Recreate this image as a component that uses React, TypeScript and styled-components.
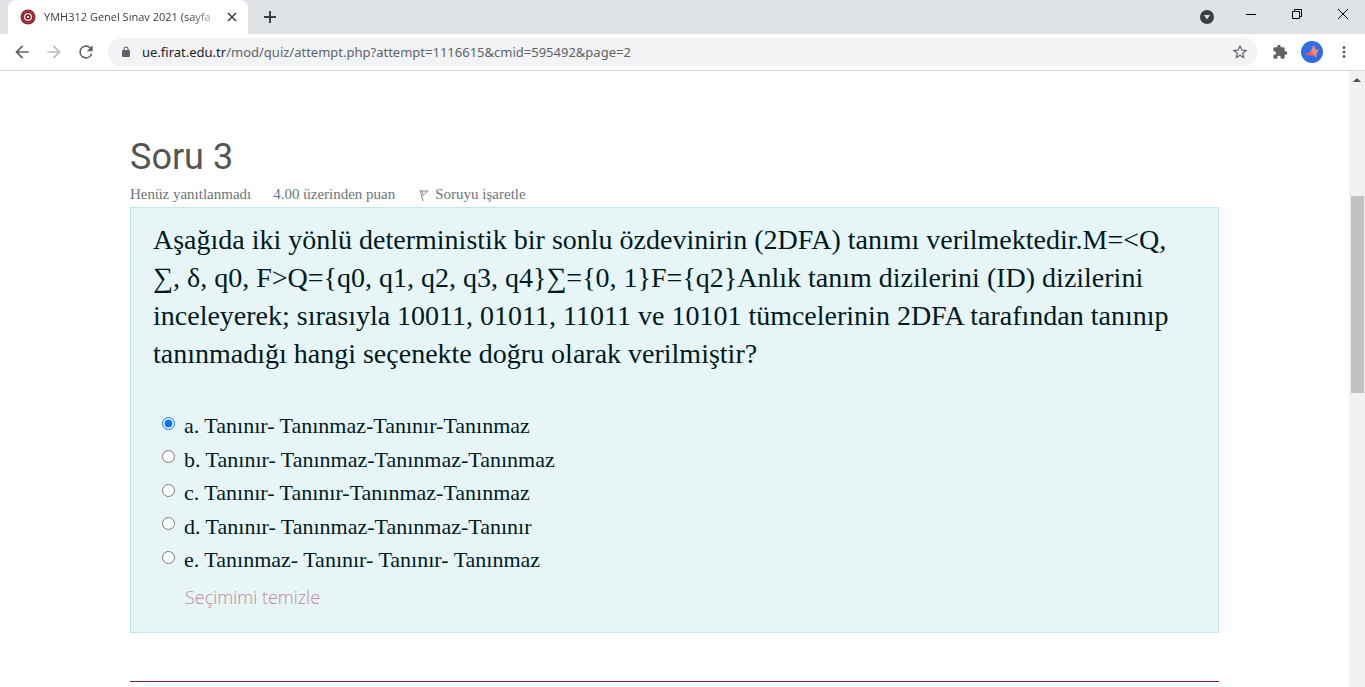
import React, { useState } from 'react';
import styled, { createGlobalStyle } from 'styled-components';

const GlobalStyle = createGlobalStyle`
  * { box-sizing: border-box; }
  html, body, #root { height: 100%; }
  body { margin: 0; background: #fff; overflow: hidden; }
`;

const ui = `'Open Sans', 'Noto Sans', sans-serif`;
const serif = `Georgia, 'Liberation Serif', serif`;

const Browser = styled.div`
  display: flex;
  flex-direction: column;
  height: 100vh;
  font-family: ${ui};
`;

const TabStrip = styled.header`
  display: flex;
  align-items: flex-end;
  flex: none;
  height: 34px;
  padding-left: 8px;
  background: #dee1e6;
`;

const Tab = styled.div`
  display: flex;
  align-items: center;
  width: 240px;
  height: 34px;
  padding: 0 8px 0 12px;
  border-radius: 8px 8px 0 0;
  background: #fff;
`;

const TabTitle = styled.span`
  flex: 1;
  min-width: 0;
  margin: 0 6px 0 8px;
  overflow: hidden;
  white-space: nowrap;
  font-size: 11px;
  line-height: 16px;
  color: #3c4043;
  mask-image: linear-gradient(to right, #000 84%, rgba(0, 0, 0, 0.2));
`;

const IconButton = styled.button<{ $width?: number; $height?: number }>`
  display: flex;
  align-items: center;
  justify-content: center;
  flex: none;
  width: ${(p) => p.$width ?? 32}px;
  height: ${(p) => p.$height ?? 32}px;
  padding: 0;
  border: 0;
  background: transparent;
  color: #5f6368;
`;

const WindowControls = styled.div`
  display: flex;
  align-items: flex-start;
  align-self: flex-start;
  margin-left: auto;
`;

const Toolbar = styled.nav`
  display: flex;
  align-items: center;
  flex: none;
  height: 37px;
  padding: 0 5px 0 6px;
  border-bottom: 1px solid #d5d7da;
  background: #fff;
`;

const AddressBar = styled.label`
  display: flex;
  align-items: center;
  flex: 1;
  height: 28px;
  margin: 0 6px;
  padding: 0 2px 0 12px;
  border-radius: 14px;
  background: #f1f3f4;
`;

const Address = styled.div`
  position: relative;
  flex: 1;
  height: 20px;
  margin-left: 10px;
  font-family: 'Noto Sans', sans-serif;
  font-size: 13px;
  line-height: 20px;
`;

const AddressInput = styled.input`
  width: 100%;
  height: 20px;
  padding: 0;
  border: 0;
  outline: 0;
  background: transparent;
  font: inherit;
  color: transparent;
`;

const AddressText = styled.span`
  position: absolute;
  inset: 0;
  pointer-events: none;
  white-space: nowrap;
  color: #5f6368;
`;

const Host = styled.span`
  color: #202124;
`;

const Viewport = styled.div`
  display: flex;
  flex: 1;
  min-height: 0;
`;

const Page = styled.main`
  flex: 1;
  min-width: 0;
  padding: 64px 130px 0;
  overflow: hidden;
  font-family: ${serif};
`;

const Title = styled.h1`
  margin: 0;
  font-family: Roboto, sans-serif;
  font-size: 36px;
  font-weight: 400;
  line-height: 44px;
  color: #555;
`;

const Meta = styled.div`
  display: flex;
  align-items: center;
  gap: 22px;
  height: 20px;
  margin: 5px 0 3px;
  font-size: 15px;
  line-height: 20px;
  color: #6c757d;
`;

const FlagLink = styled.a`
  display: flex;
  align-items: center;
  gap: 6px;
  color: inherit;
  text-decoration: none;
`;

const Card = styled.section`
  padding: 13px 22px 20px;
  border: 1px solid #bee5eb;
  background: #e7f5f6;
  color: #001a1e;
`;

const Question = styled.p`
  margin: 0 0 37px;
  font-size: 28px;
  line-height: 38px;
`;

const Answers = styled.fieldset`
  display: flex;
  flex-direction: column;
  justify-content: space-between;
  height: 166px;
  margin: 0;
  padding: 0 0 0 9px;
  border: 0;
`;

const Answer = styled.label`
  display: flex;
  align-items: center;
  gap: 9px;
  font-size: 22px;
  line-height: 32px;
`;

const Radio = styled.input`
  width: 13px;
  height: 13px;
  margin: 0 0 6px;
  accent-color: #0075ff;
`;

const ClearLink = styled.a`
  display: inline-block;
  margin: 6px 0 0 32px;
  font-family: ${ui};
  font-size: 18px;
  font-weight: 300;
  line-height: 30px;
  color: #c487a0;
  text-decoration: none;
`;

const Divider = styled.hr`
  height: 1px;
  margin: 48px 0 0;
  border: 0;
  background: #8b1f41;
`;

const ScrollTrack = styled.div`
  display: flex;
  flex-direction: column;
  align-items: center;
  width: 16px;
  background: #f1f1f1;
`;

const ScrollThumb = styled.div`
  width: 13px;
  height: 32%;
  margin-top: 108px;
  background: #c1c1c1;
`;

const question =
  'Aşağıda iki yönlü deterministik bir sonlu özdevinirin (2DFA) tanımı verilmektedir.M=<Q, ∑, δ, q0, ' +
  'F>Q={q0, q1, q2, q3, q4}∑={0, 1}F={q2}Anlık tanım dizilerini (ID) dizilerini inceleyerek; sırasıyla ' +
  '10011, 01011, 11011 ve 10101 tümcelerinin 2DFA tarafından tanınıp tanınmadığı hangi seçenekte doğru ' +
  'olarak verilmiştir?';

const options = [
  'a. Tanınır- Tanınmaz-Tanınır-Tanınmaz',
  'b. Tanınır- Tanınmaz-Tanınmaz-Tanınmaz',
  'c. Tanınır- Tanınır-Tanınmaz-Tanınmaz',
  'd. Tanınır- Tanınmaz-Tanınmaz-Tanınır',
  'e. Tanınmaz- Tanınır- Tanınır- Tanınmaz',
];

const Icon = ({ d, size = 20, color = '#5f6368' }: { d: string; size?: number; color?: string }) => (
  <svg width={size} height={size} viewBox="0 0 24 24" fill={color} aria-hidden="true">
    <path d={d} />
  </svg>
);

const paths = {
  back: 'M20 11H7.83l5.59-5.59L12 4l-8 8 8 8 1.41-1.41L7.83 13H20v-2z',
  forward: 'M12 4l-1.41 1.41L16.17 11H4v2h12.17l-5.58 5.59L12 20l8-8z',
  reload:
    'M17.65 6.35A7.95 7.95 0 0 0 12 4a8 8 0 1 0 7.73 10h-2.08A6 6 0 1 1 12 6c1.66 0 3.14.69 4.22 1.78L13 11h7V4l-2.35 2.35z',
  lock: 'M18 8h-1V6A5 5 0 0 0 7 6v2H6a2 2 0 0 0-2 2v10a2 2 0 0 0 2 2h12a2 2 0 0 0 2-2V10a2 2 0 0 0-2-2zM9 6a3 3 0 0 1 6 0v2H9V6z',
  star: 'M22 9.24l-7.19-.62L12 2 9.19 8.63 2 9.24l5.46 4.73L5.82 21 12 17.27 18.18 21l-1.63-7.03L22 9.24zM12 15.4l-3.76 2.27 1-4.28-3.32-2.88 4.38-.38L12 6.1l1.71 4.04 4.38.38-3.32 2.88 1 4.28L12 15.4z',
  puzzle:
    'M20.5 11H19V7a2 2 0 0 0-2-2h-4V3.500a2.500 2.500 0 0 0-5 0V5H4a2 2 0 0 0-2 2v3.800h1.500a2.700 2.700 0 0 1 0 5.400H2V20a2 2 0 0 0 2 2h3.800v-1.500a2.700 2.700 0 0 1 5.400 0V22H17a2 2 0 0 0 2-2v-4h1.500a2.500 2.500 0 0 0 0-5z',
  dots: 'M12 8a2 2 0 1 0 0-4 2 2 0 0 0 0 4zm0 2a2 2 0 1 0 0 4 2 2 0 0 0 0-4zm0 6a2 2 0 1 0 0 4 2 2 0 0 0 0-4z',
};

export default function App() {
  const [selected, setSelected] = useState<number | null>(0);
  const [address, setAddress] = useState('ue.firat.edu.tr/mod/quiz/attempt.php?attempt=1116615&cmid=595492&page=2');
  const slash = address.indexOf('/') < 0 ? address.length : address.indexOf('/');

  return (
    <Browser>
      <GlobalStyle />
      <TabStrip>
        <Tab>
          <svg width="16" height="16" viewBox="0 0 16 16" aria-hidden="true">
            <circle cx="8" cy="8" r="7.500" fill="#8d1b22" />
            <circle cx="8" cy="8" r="5.800" fill="none" stroke="#c98486" strokeDasharray="1 1" />
            <circle cx="8" cy="8" r="4" fill="#f6e9e9" />
            <circle cx="8" cy="8" r="2.700" fill="#8d1b22" />
            <path d="M7 7h2v2H7z" fill="#f6e9e9" />
          </svg>
          <TabTitle>YMH312 Genel Sınav 2021 (sayfa</TabTitle>
          <IconButton $width={16} $height={16} aria-label="Close tab">
            <svg width="10" height="10" viewBox="0 0 10 10" stroke="#3c4043" strokeWidth="1.600">
              <path d="M1 1l8 8M9 1L1 9" />
            </svg>
          </IconButton>
        </Tab>
        <IconButton $width={44} $height={34} aria-label="New tab">
          <svg width="12" height="12" viewBox="0 0 12 12" stroke="#3c4043" strokeWidth="2">
            <path d="M6 0v12M0 6h12" />
          </svg>
        </IconButton>
        <WindowControls>
          <IconButton $width={42} $height={34} aria-label="Search tabs">
            <svg width="14" height="14" viewBox="0 0 14 14">
              <circle cx="7" cy="7" r="7" fill="#3c4043" />
              <path d="M4 5h6L7 9.500z" fill="#dee1e6" />
            </svg>
          </IconButton>
          <IconButton $width={46} $height={28} aria-label="Minimize">
            <svg width="10" height="10" viewBox="0 0 10 10" stroke="#000">
              <path d="M0 5.500h10" />
            </svg>
          </IconButton>
          <IconButton $width={46} $height={28} aria-label="Restore">
            <svg width="10" height="10" viewBox="0 0 10 10" stroke="#000" fill="none">
              <path d="M.5 2.500h7v7h-7zM2.500 2.500v-2h7v7h-2" />
            </svg>
          </IconButton>
          <IconButton $width={45} $height={28} aria-label="Close">
            <svg width="10" height="10" viewBox="0 0 10 10" stroke="#000">
              <path d="M0 0l10 10M10 0L0 10" />
            </svg>
          </IconButton>
        </WindowControls>
      </TabStrip>
      <Toolbar>
        <IconButton aria-label="Back"><Icon d={paths.back} /></IconButton>
        <IconButton aria-label="Forward"><Icon d={paths.forward} color="#babcbe" /></IconButton>
        <IconButton aria-label="Reload"><Icon d={paths.reload} /></IconButton>
        <AddressBar>
          <Icon d={paths.lock} size={12} />
          <Address>
            <AddressInput aria-label="Address" value={address} onChange={(e) => setAddress(e.target.value)} />
            <AddressText aria-hidden="true">
              <Host>{address.slice(0, slash)}</Host>
              {address.slice(slash)}
            </AddressText>
          </Address>
          <IconButton aria-label="Bookmark this page"><Icon d={paths.star} size={18} /></IconButton>
        </AddressBar>
        <IconButton aria-label="Extensions"><Icon d={paths.puzzle} size={16} /></IconButton>
        <IconButton aria-label="Profile">
          <svg width="22" height="22" viewBox="0 0 22 22">
            <circle cx="11" cy="11" r="11" fill="#2f6ce5" />
            <path d="M12.500 3.500l-3 7.500 3.500 4z" fill="#f28b82" />
            <path d="M12.500 3.500l.5 10.500 2 3 .5-4 2.500-5-3 1z" fill="#f58a80" />
            <path d="M3.500 13.500l6-3 4 4-2.500 1-3.500-1.500z" fill="#e8594f" />
          </svg>
        </IconButton>
        <IconButton aria-label="Menu"><Icon d={paths.dots} size={18} /></IconButton>
      </Toolbar>
      <Viewport>
        <Page>
          <Title>Soru 3</Title>
          <Meta>
            <span>Henüz yanıtlanmadı</span>
            <span>4.00 üzerinden puan</span>
            <FlagLink href="#flag">
              <svg width="12" height="14" viewBox="0 0 12 14" fill="none" stroke="#888">
                <path d="M3 3l3 11M3 4l8 0-6 5M5 4l1 3" />
              </svg>
              Soruyu işaretle
            </FlagLink>
          </Meta>
          <Card>
            <Question>{question}</Question>
            <Answers aria-label="Soru 3">
              {options.map((text, i) => (
                <Answer key={text}>
                  <Radio type="radio" name="answer" checked={selected === i} onChange={() => setSelected(i)} />
                  {text}
                </Answer>
              ))}
            </Answers>
            <ClearLink
              href="#clear"
              onClick={(e) => {
                e.preventDefault();
                setSelected(null);
              }}
            >
              Seçimimi temizle
            </ClearLink>
          </Card>
          <Divider />
        </Page>
        <ScrollTrack aria-hidden="true">
          <svg width="16" height="17" viewBox="0 0 16 17">
            <path d="M4 11l4-4 4 4z" fill="#505050" />
          </svg>
          <ScrollThumb />
        </ScrollTrack>
      </Viewport>
    </Browser>
  );
}
